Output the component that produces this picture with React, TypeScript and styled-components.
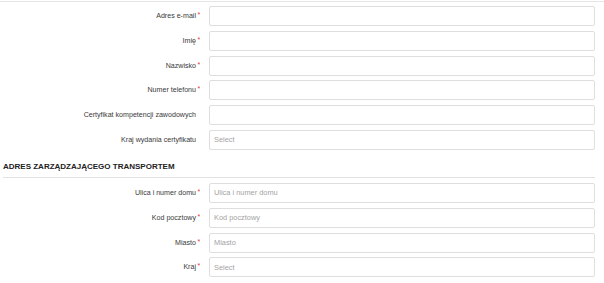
import React from "react";
import styled, { createGlobalStyle } from "styled-components";

const GlobalStyle = createGlobalStyle`
  html, body {
    margin: 0;
    padding: 0;
    background: #ffffff;
  }
  body {
    font-family: "Liberation Sans", Arial, sans-serif;
    color: #333333;
  }
`;

const Page = styled.div`
  width: 604px;
  box-sizing: border-box;
  padding: 1px 9px 0 3px;
`;

const TopRule = styled.div`
  height: 1px;
  margin: 0 -9px 4px -3px;
  background: #e6e6e6;
`;

const Fields = styled.div`
  display: flex;
  flex-direction: column;
  gap: 4.8px;
`;

const Row = styled.div`
  display: grid;
  grid-template-columns: 206px 1fr;
  align-items: center;
`;

const Label = styled.label`
  justify-self: end;
  padding-right: 13px;
  font-size: 7.1px;
  line-height: 10px;
  color: #3a3a3a;
  white-space: nowrap;
`;

const LabelText = styled.span<{ $required?: boolean }>`
  position: relative;

  &::after {
    content: ${(p) => (p.$required ? '"*"' : '""')};
    position: absolute;
    left: 100%;
    top: -2px;
    margin-left: 1.5px;
    color: #e53935;
    font-size: 7px;
  }
`;

const TextInput = styled.input`
  box-sizing: border-box;
  width: 100%;
  height: 20px;
  margin: 0;
  padding: 0 4px;
  border: 1px solid #dedede;
  border-radius: 2px;
  background: #ffffff;
  font-family: "Liberation Sans", Arial, sans-serif;
  font-size: 7.4px;
  color: #333333;
  outline: none;

  &::placeholder {
    color: #a3a3a3;
  }
`;

const SelectBox = styled.div`
  box-sizing: border-box;
  width: 100%;
  height: 20px;
  padding: 0 4px;
  display: flex;
  align-items: center;
  border: 1px solid #dedede;
  border-radius: 2px;
  background: #ffffff;
  font-size: 7.4px;
  color: #a3a3a3;
`;

const SectionTitle = styled.h3`
  margin: 12px 0 5px;
  padding: 0 0 5px 0;
  border-bottom: 1px solid #e2e2e2;
  font-size: 8px;
  line-height: 10px;
  font-weight: 700;
  color: #222222;
  letter-spacing: 0;
`;

type Field = {
  label: string;
  required?: boolean;
  kind?: "text" | "select";
  placeholder?: string;
};

const personal: Field[] = [
  { label: "Adres e-mail", required: true },
  { label: "Imię", required: true },
  { label: "Nazwisko", required: true },
  { label: "Numer telefonu", required: true },
  { label: "Certyfikat kompetencji zawodowych" },
  { label: "Kraj wydania certyfikatu", kind: "select" },
];

const address: Field[] = [
  { label: "Ulica i numer domu", required: true, placeholder: "Ulica i numer domu" },
  { label: "Kod pocztowy", required: true, placeholder: "Kod pocztowy" },
  { label: "Miasto", required: true, placeholder: "Miasto" },
  { label: "Kraj", required: true, kind: "select" },
];

function FieldRow({ field }: { field: Field }) {
  return (
    <Row>
      <Label>
        <LabelText $required={field.required}>{field.label}</LabelText>
      </Label>
      {field.kind === "select" ? (
        <SelectBox>Select</SelectBox>
      ) : (
        <TextInput type="text" placeholder={field.placeholder} />
      )}
    </Row>
  );
}

export default function App() {
  return (
    <>
      <GlobalStyle />
      <Page>
        <TopRule />
        <Fields>
          {personal.map((f) => (
            <FieldRow key={f.label} field={f} />
          ))}
        </Fields>
        <SectionTitle>ADRES ZARZĄDZAJĄCEGO TRANSPORTEM</SectionTitle>
        <Fields>
          {address.map((f) => (
            <FieldRow key={f.label} field={f} />
          ))}
        </Fields>
      </Page>
    </>
  );
}
